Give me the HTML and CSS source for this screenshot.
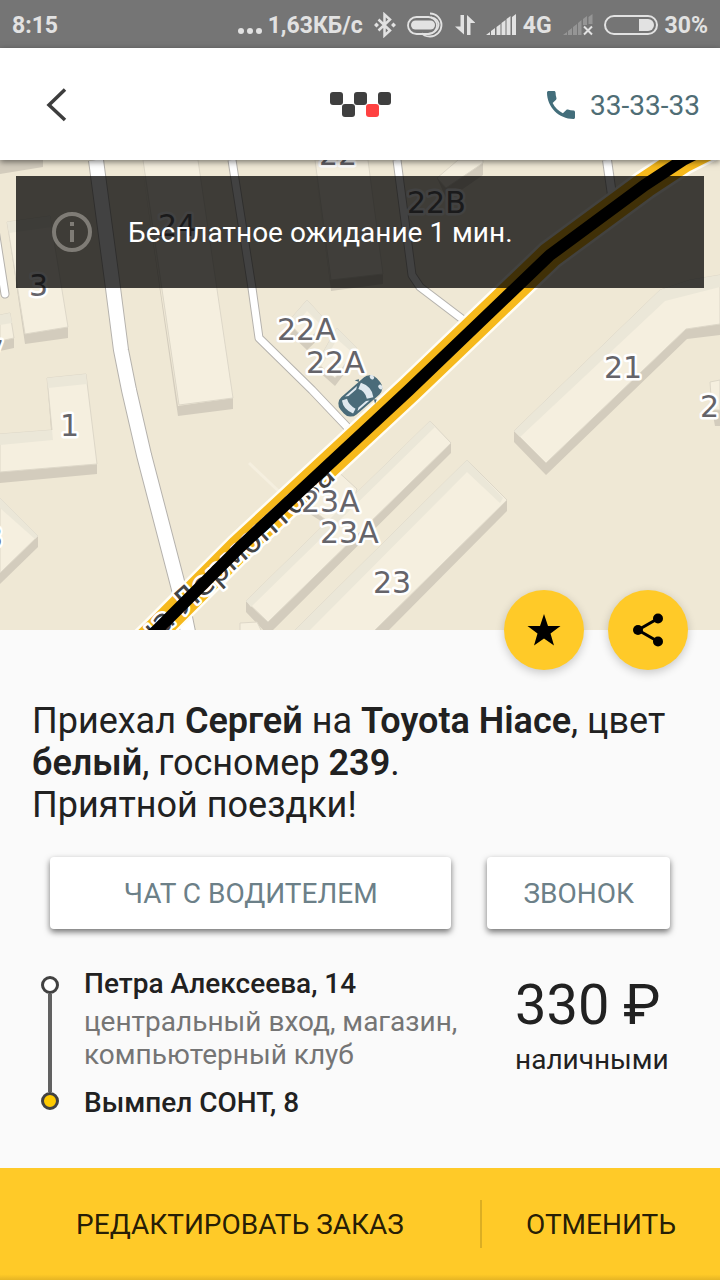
FILE: index.html
```html
<!DOCTYPE html>
<html lang="ru">
<head>
  <meta charset="UTF-8">
  <meta name="viewport" content="width=device-width, initial-scale=1.0">
  <title>Заказ такси</title>
  <link rel="stylesheet" href="styles.css">
</head>
<body>
  <div class="statusbar">
    <span>8:15</span>
    <div class="status-icons">
      <span class="net-speed">
        <svg width="24" height="8" viewBox="0 0 24 8"><circle cx="3" cy="4" r="3"/><circle cx="12" cy="4" r="3"/><circle cx="21" cy="4" r="3"/></svg>
        1,63КБ/с
      </span>
      <svg width="22" height="26" viewBox="0 0 22 26">
        <path d="M4.500 7.500 16 18.500 10.500 23.500V2.500L16 7.500 4.500 18.500" fill="none" stroke="#e2e2e2" stroke-width="2.500"/>
        <path d="M2.500 10.500 5 13l-2.500 2.500L0 13zM19.500 10.500 22 13l-2.500 2.500L17 13z"/>
      </svg>
      <svg width="37" height="26" viewBox="0 0 37 26">
        <g fill="none" stroke="#e2e2e2" stroke-width="1.800">
          <rect x="1" y="5" width="29" height="17" rx="8.500"/>
          <path d="M23 1.500a11.500 11.500 0 0 1 0 23c-4 0-7-1-8-3.500"/>
          <path d="M24 5.500c11 1 10 15-3 16.500"/>
        </g>
        <rect x="4" y="8.500" width="24" height="9" rx="4.500"/>
      </svg>
      <svg width="20" height="22" viewBox="0 0 20 22"><path d="M5.500 1H9v19.500L0 12.500h5.500zM12 21V1l8.500 8h-5v12z"/></svg>
      <svg width="30" height="22" viewBox="0 0 30 22"><path d="M0 21l4-3v3zM5 17l4-3v7H5zM10.500 13l4-3v11h-4zM15.500 9l4-3v15h-4zM20.500 5l4-3v19h-4zM26 3l4-3v21h-4z"/></svg>
      <span class="status-label">4G</span>
      <svg width="30" height="22" viewBox="0 0 30 22">
        <path opacity=".3" d="M0 21l4-3v3zM5 17l4-3v7H5zM10 13l4-3v11h-4zM15 9l3.500-3v15H15zM20 5l4-3v9h-4zM25.500 3l4-3v10h-4z"/>
        <path d="M21 12.500l8 8M29 12.500l-8 8" stroke="#e2e2e2" stroke-width="2"/>
      </svg>
      <svg width="54" height="20" viewBox="0 0 54 20">
        <rect x="1" y="1" width="52" height="18" rx="9" fill="none" stroke="#e2e2e2" stroke-width="2"/>
        <path d="M35 4h9a6 6 0 0 1 0 12h-9z"/>
      </svg>
      <span class="status-label">30%</span>
    </div>
  </div>

  <header class="header">
    <button class="back" aria-label="Назад">
      <svg width="22" height="34" viewBox="0 0 22 34"><path d="M19 1.500 3 17l16 15" fill="none" stroke="#3d3d3d" stroke-width="3.500"/></svg>
    </button>
    <svg class="logo" width="62" height="26" viewBox="0 0 62 26" role="img" aria-label="Такси">
      <g fill="#3f3f3f">
        <rect x="1" y="0" width="13" height="13" rx="3"/>
        <rect x="13" y="12" width="13" height="13" rx="3"/>
        <rect x="25" y="0" width="13" height="13" rx="3"/>
        <rect x="49" y="0" width="13" height="13" rx="3"/>
      </g>
      <rect x="37" y="12" width="13" height="13" rx="3" fill="#ff4141"/>
    </svg>
    <a class="phone" href="tel:333333">
      <svg width="28" height="28" viewBox="3 3 18 18"><path fill="#436e7b" d="M6.620 10.790c1.440 2.830 3.760 5.140 6.590 6.590l2.200-2.200c.270-.270.670-.360 1.020-.240 1.120.370 2.330.570 3.570.570.550 0 1 .450 1 1V20c0 .550-.450 1-1 1-9.390 0-17-7.610-17-17 0-.550.450-1 1-1h3.500c.550 0 1 .450 1 1 0 1.250.200 2.450.570 3.570.110.350.030.740-.250 1.020l-2.200 2.200z"/></svg>
      33-33-33
    </a>
  </header>

  <main class="map">
    <svg class="map-canvas" viewBox="0 160 720 470" preserveAspectRatio="xMidYMid slice">
      <rect class="ground" y="160" width="720" height="470"/>

      <!-- small roads -->
      <g class="road-edge">
        <path d="M96 160 113 288 121 350 129 390 144 455 180 593 188 632" stroke-width="16"/>
        <path d="M232 160 252 288 259 338 312 390 350 430" stroke-width="9"/>
        <path d="M397 160 412 275 420 287 470 325" stroke-width="9"/>
        <path d="M607 160 613 202" stroke-width="10"/>
        <path d="M-5 230 5 294" stroke-width="9" stroke-linecap="round"/>
      </g>
      <g class="road">
        <path d="M96 160 113 288 121 350 129 390 144 455 180 593 188 632" stroke-width="14"/>
        <path d="M232 160 252 288 259 338 312 390 350 430" stroke-width="7"/>
        <path d="M397 160 412 275 420 287 470 325" stroke-width="7"/>
        <path d="M607 160 613 202" stroke-width="8"/>
        <path d="M-5 230 5 294" stroke-width="7" stroke-linecap="round"/>
      </g>
      <path d="M249 463 288 500" fill="none" stroke="#f5efdf" stroke-width="3"/>

      <!-- buildings: wall, roof, back side -->
      <g class="wall">
        <path d="M0 160H43V167L0 174z"/>
        <path d="M7 222 25 334 68 327V338L25 344z"/>
        <path d="M0 341 14 338V348L0 351z"/>
        <path d="M0 472 97 464V474L0 483z"/>
        <path d="M47 378 52 430 51 430z"/>
        <path d="M38 536V547L0 584V573z"/>
        <path d="M141 160 178 406 233 398V409L178 416z"/>
        <path d="M314 160 330 280 383 274V284L331 291z"/>
        <path d="M437 178 446 188 483 163V175L447 200z"/>
        <path d="M288 322 306 341 328 323V330L307 350 288 332z"/>
        <path d="M317 363 335 378 357 350V357L335 386 317 370z"/>
        <path d="M514 431 546 463 686 329 720 324V335L687 339 546 475 514 442z"/>
        <path d="M712 410H720V426H715z"/>
        <path d="M246 601 268 622 451 443V453L268 635 246 612z"/>
        <path d="M507 500V511L387 632H373z"/>
        <path d="M310 508 330 523 352 505V512L330 527 310 514z"/>
      </g>
      <g class="roof">
        <path d="M7 222 50 216 68 327 25 334z"/>
        <path d="M0 315 10 313 14 338 0 341z"/>
        <path d="M47 378 86 374 97 464 0 472V434L52 430z"/>
        <path d="M0 498 38 536 0 573z"/>
        <path d="M143 160H198L233 398 179 405z"/>
        <path d="M315 160H368L383 274 331 280z"/>
        <path d="M437 178 458 160H483V163L446 188z"/>
        <path d="M307 300 328 323 306 341 288 322z"/>
        <path d="M337 328 357 348 335 378 317 363z"/>
        <path d="M514 431 660 290 690 280 720 275V324L686 329 546 463z"/>
        <path d="M710 382 720 380V410H712z"/>
        <path d="M430 421 451 443 268 622 246 601z"/>
        <path d="M467 460 507 500 373 632H293z"/>
        <path d="M333 467 357 489 352 505 330 523 310 508z"/>
        <path d="M240 623 257 622 262 632H240z"/>
      </g>
      <g class="shade">
        <path d="M7 222 50 216 52 227 9 233z"/>
        <path d="M0 315 10 313 12 323 0 325z"/>
        <path d="M0 434 52 430 53 440 0 445z"/>
        <path d="M47 378 86 374 87 384 48 388z"/>
        <path d="M0 498 38 536 35 539 0 508z"/>
        <path d="M514 431 660 290 690 280 720 275V287L665 301 520 437z"/>
        <path d="M246 601 430 421 435 427 251 607z"/>
        <path d="M293 632 467 460 503 498 500 503 467 472 308 632z"/>
        <path d="M307 300 328 323 323 327 307 311 293 327 288 322z"/>
        <path d="M337 328 357 348 353 353 337 339 321 367 317 363z"/>
      </g>

      <!-- main street -->
      <g class="street">
        <path class="street-edge" d="M128 658 157 630 240 547 409 390 480 322 550 255 645 185 683 160 722 140"/>
        <path class="street-fill" d="M128 658 157 630 240 547 409 390 480 322 550 255 645 185 683 160 722 140"/>
      </g>

      <g class="labels">
        <text x="319" y="165">22</text>
        <text x="158" y="236">24</text>
        <text x="29" y="296">3</text>
        <text x="407" y="213">22В</text>
        <text x="277" y="340">22А</text>
        <text x="306" y="373">22А</text>
        <text x="604" y="378">21</text>
        <text x="700" y="417">2</text>
        <text x="60" y="436">1</text>
        <text x="-16" y="548">3</text>
        <text x="-15" y="362">7</text>
        <text x="373" y="593">23</text>
      </g>
      <text class="street-name" transform="translate(337 478) rotate(-42)">улица Лермонтова</text>
      <g class="labels">
        <text x="301" y="512">23А</text>
        <text x="320" y="543">23А</text>
      </g>

      <!-- route -->
      <path class="route-line" d="M128 658 157 630 240 547 409 390 480 322 550 255 645 185 683 160 722 140"/>

      <!-- car -->
      <g transform="translate(360 395.500) rotate(-41)">
        <rect x="-24" y="-11" width="48" height="23" rx="9" fill="#4a6b79"/>
        <path d="M8-11 6-15 10-13M8 12 6 16 10 14" fill="#4a6b79"/>
        <path d="M-17-8q-5 8 0 17l5-2q-3-7 0-13z" fill="#dfe8ee"/>
        <path d="M3-6q4 6 0 13l6 3q6-9 0-19z" fill="#dfe8ee"/>
        <path d="M-12-9H4L1-7H-9zM-12 10H4L1 8H-9z" fill="#dfe8ee"/>
        <ellipse cx="21" cy="-6" rx="2" ry="2.500" fill="#dfe8ee"/>
        <ellipse cx="21" cy="7" rx="2" ry="2.500" fill="#dfe8ee"/>
      </g>
    </svg>

    <div class="notice">
      <svg width="40" height="40" viewBox="0 0 40 40">
        <circle cx="20" cy="20" r="18" fill="none" stroke="#7f7c76" stroke-width="4"/>
        <path d="M18 10h4v4h-4zM18 18h4v12h-4z" fill="#7f7c76"/>
      </svg>
      <p>Бесплатное ожидание 1 мин.</p>
    </div>

    <div class="map-actions">
      <button class="fab" aria-label="В избранное">
        <svg width="34" height="32" viewBox="0 0 34 32"><path d="M17 0 21 12H33.500L23.500 19.500 27 31.500 17 24.500 7 31.500 10.500 19.500.500 12H13z"/></svg>
      </button>
      <button class="fab" aria-label="Поделиться">
        <svg width="30" height="34" viewBox="0 0 30 34">
          <path d="M25 5.500 5 17l20 11.500" fill="none" stroke="#000" stroke-width="3"/>
          <circle cx="25" cy="5.500" r="5"/><circle cx="5" cy="17" r="5"/><circle cx="25" cy="28.500" r="5"/>
        </svg>
      </button>
    </div>
  </main>

  <section class="order">
    <h1 class="order-title">Приехал <strong>Сергей</strong> на <strong>Toyota Hiace</strong>, цвет <strong>белый</strong>, госномер <strong>239</strong>.<br>Приятной поездки!</h1>

    <div class="contact">
      <button class="contact-btn contact-chat">ЧАТ С ВОДИТЕЛЕМ</button>
      <button class="contact-btn">ЗВОНОК</button>
    </div>

    <div class="details">
      <div class="rail">
        <span class="dot"></span>
        <span class="line"></span>
        <span class="dot dot-end"></span>
      </div>
      <div class="route">
        <p class="address">Петра Алексеева, 14</p>
        <p class="hint">центральный вход, магазин, компьютерный клуб</p>
        <p class="address">Вымпел СОНТ, 8</p>
      </div>
      <div class="price">
        <p class="amount">330 ₽</p>
        <p>наличными</p>
      </div>
    </div>
  </section>

  <footer class="footer">
    <button>РЕДАКТИРОВАТЬ ЗАКАЗ</button>
    <button>ОТМЕНИТЬ</button>
  </footer>
</body>
</html>
```

FILE: styles.css
```css
* {
  margin: 0;
  padding: 0;
  box-sizing: border-box;
}

body {
  font-family: Roboto, 'Liberation Sans', sans-serif;
  font-size: 28px;
  color: #212121;
  background: #fafafa;
  min-height: 100vh;
  display: flex;
  flex-direction: column;
}

button {
  font: inherit;
  color: inherit;
  background: none;
  border: none;
  cursor: pointer;
}

svg {
  display: block;
  flex-shrink: 0;
}

/* status bar */
.statusbar {
  height: 48px;
  padding: 2px 12px 0;
  background: #757575;
  color: #e2e2e2;
  font-size: 23px;
  font-weight: 700;
  display: flex;
  align-items: center;
  justify-content: space-between;
}

.status-icons {
  display: flex;
  align-items: center;
  gap: 11px;
  fill: #e2e2e2;
}

.net-speed {
  display: flex;
  align-items: center;
  gap: 6px;
}

.net-speed svg {
  margin-top: 12px;
}

.status-label {
  margin-left: -4px;
}

/* header */
.header {
  position: relative;
  z-index: 2;
  height: 112px;
  padding: 2px 20px 0;
  background: #fff;
  box-shadow: 0 2px 6px rgba(0, 0, 0, 0.5);
  display: grid;
  grid-template-columns: 1fr auto 1fr;
  align-items: center;
}

.back {
  justify-self: start;
  padding: 12px 26px;
}

.phone {
  justify-self: end;
  display: flex;
  align-items: center;
  gap: 15px;
  color: #4f6d75;
  text-decoration: none;
}

/* map */
.map {
  position: relative;
  flex: 1;
  min-height: 470px;
}

.map-canvas {
  position: absolute;
  width: 100%;
  height: 100%;
}

.ground {
  fill: #efe8d5;
}

.wall {
  fill: #d3ccbd;
}

.roof {
  fill: #f5efdf;
  stroke: #ddd7c8;
  stroke-width: 1;
}

.shade {
  fill: #ebe7d8;
}

.road,
.road-edge,
.street {
  fill: none;
  stroke-linejoin: round;
}

.road {
  stroke: #fff;
}

.road-edge {
  stroke: #b5b2ad;
}

.street-edge {
  stroke: #fffdf5;
  stroke-width: 31px;
}

.street-fill {
  stroke: #f6b91c;
  stroke-width: 26px;
}

.route-line {
  fill: none;
  stroke: #000;
  stroke-width: 12px;
}

.labels,
.street-name {
  font-family: 'DejaVu Sans', sans-serif;
  font-size: 30px;
  fill: #65646a;
  stroke: #fff;
  stroke-width: 5px;
  stroke-linejoin: round;
  paint-order: stroke;
}

.street-name {
  font-size: 32px;
  fill: #444;
  text-anchor: end;
}

.notice {
  position: absolute;
  top: 16px;
  left: 16px;
  right: 16px;
  height: 112px;
  padding: 0 36px;
  background: rgba(0, 0, 0, 0.74);
  color: #fff;
  display: flex;
  align-items: center;
  gap: 36px;
}

.map-actions {
  position: absolute;
  right: 32px;
  bottom: -40px;
  display: flex;
  gap: 24px;
}

.fab {
  width: 80px;
  height: 80px;
  border-radius: 50%;
  background: #ffca28;
  box-shadow: 0 3px 10px rgba(0, 0, 0, 0.2);
  display: flex;
  align-items: center;
  justify-content: center;
}

/* order */
.order {
  padding: 70px 32px 48px;
}

.order-title {
  font-size: 36px;
  font-weight: 400;
  line-height: 42px;
}

.order-title strong {
  font-weight: 600;
}

.contact {
  display: flex;
  gap: 36px;
  margin: 31px 18px 0;
}

.contact-btn {
  height: 72px;
  padding: 0 36px;
  border-radius: 4px;
  background: #fff;
  color: #6c8088;
  box-shadow: 0 3px 6px rgba(0, 0, 0, 0.55);
}

.contact-chat {
  flex: 1;
}

.details {
  display: flex;
  margin-top: 38px;
}

.rail {
  display: flex;
  flex-direction: column;
  align-items: center;
  margin: 9px 25px 10px 9px;
}

.dot {
  width: 18px;
  height: 18px;
  border: 3px solid #424242;
  border-radius: 50%;
  background: #fff;
}

.dot-end {
  background: #ffca00;
}

.line {
  flex: 1;
  width: 4px;
  background: #616161;
}

.route {
  flex: 1;
}

.address {
  font-weight: 500;
  line-height: 34px;
}

.hint {
  margin: 4px 0 15px;
  color: #757575;
  line-height: 33px;
}

.price {
  width: 173px;
  margin-left: 24px;
  line-height: 34px;
}

.amount {
  font-size: 56px;
  line-height: 76px;
}

/* footer */
.footer {
  height: 112px;
  background: linear-gradient(#ffca28 95%, #e6b524);
  display: grid;
  grid-template-columns: 2fr 1fr;
  align-items: center;
}

.footer button {
  height: 48px;
  color: rgba(0, 0, 0, 0.87);
}

.footer button + button {
  border-left: 2px solid #dbae23;
}
```
